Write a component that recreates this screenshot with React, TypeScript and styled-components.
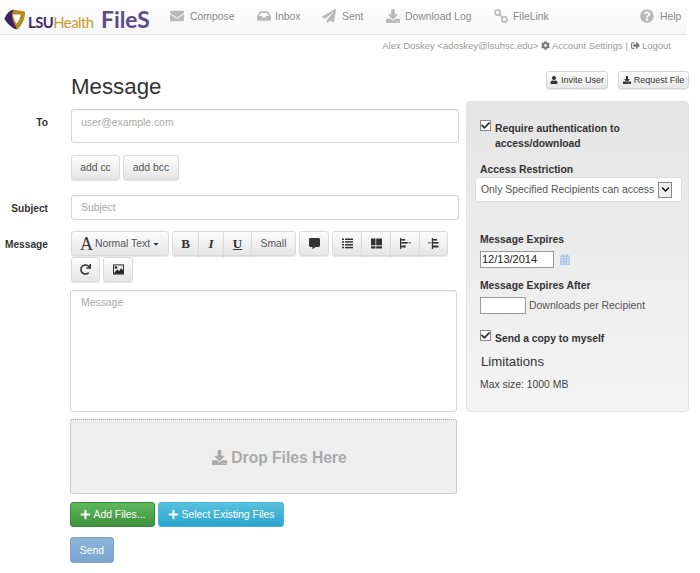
import React from "react";
import styled, { createGlobalStyle } from "styled-components";
import {
  FaEnvelope, FaInbox, FaPaperPlane, FaDownload, FaQuestionCircle, FaCog, FaSignOutAlt, FaUser,
  FaPlus, FaCommentAlt, FaRedo, FaCalendarAlt, FaCaretDown, FaCheck, FaChevronDown,
} from "react-icons/fa";

const Global = createGlobalStyle`
  html, body { margin: 0; padding: 0; background: #fff; overflow: hidden; }
  body { font-family: "Liberation Sans", Arial, sans-serif; font-size: 10.4px; color: #333; }
  * { box-sizing: border-box; }
`;

const Page = styled.div`width: 700px; height: 573px;`;

const Header = styled.header`
  width: 687px; height: 35px; display: flex; align-items: center; padding: 0 8px 0 4px;
  background: linear-gradient(#ffffff, #f6f6f6); border-bottom: 1px solid #e4e4e4;
`;
const Logo = styled.div`display: flex; align-items: center; width: 166px; flex: none;`;
const ShieldWrap = styled.span`display: flex; margin-top: 5px;`;
const LogoText = styled.span`
  font-family: Lato, sans-serif; font-size: 14.8px; letter-spacing: -0.5px; margin: 9px 0 0 2px; color: #c49a2c; width: 68px;
  b { color: #3f2a6b; font-weight: 700; }
`;
const Brand = styled.span`
  font-family: Lato, sans-serif; font-weight: 700; font-size: 22.8px; color: #5b4b8a; margin: 3px 0 0 5px;
`;
const Nav = styled.nav`display: flex; align-items: center; flex: 1; padding-bottom: 2px;`;
const NavItem = styled.a<{ $w: number; $gap: number }>`
  display: flex; align-items: center; gap: ${(p) => p.$gap}px; width: ${(p) => p.$w}px; color: #8a8a8a; font-size: 10.4px; flex: none;
  svg { color: #b9b9b9; width: 14px; height: 14px; flex: none; }
`;
const UserLine = styled.div`
  width: 671px; text-align: right; color: #999; font-size: 9.45px; height: 20px; line-height: 20px; margin-top: 1px;
  svg { width: 9px; height: 9px; color: #777; vertical-align: -1px; }
`;
const Main = styled.main`display: grid; grid-template-columns: 466px 223px; margin-top: 16px;`;
const Left = styled.div`display: flex; flex-direction: column;`;
const Right = styled.aside`display: flex; flex-direction: column;`;
const Title = styled.h1`
  font-weight: 400; font-size: 22.3px; line-height: 28px; margin: 1px 0 8px 71px; color: #333;
`;
const TopActions = styled.div`display: flex; justify-content: flex-end; gap: 10px; height: 30px; margin-top: -1px;`;
const MiniButton = styled.button<{ $w: number }>`
  height: 18px; width: ${(p) => p.$w}px; padding: 0; display: flex; align-items: center; justify-content: center; gap: 3px; font: 9px "Liberation Sans", sans-serif; color: #333;
  background: linear-gradient(#fff, #e6e6e6); border: 1px solid #d4d4d4; border-radius: 3px; box-shadow: 0 1px 1px rgba(0,0,0,.08);
  svg { width: 8px; height: 8px; }
`;
const Row = styled.div<{ $mb: number }>`display: grid; grid-template-columns: 49px 388px; column-gap: 22px; margin-bottom: ${(p) => p.$mb}px;`;
const Label = styled.label`text-align: right; font-weight: 700; font-size: 10.2px; color: #333; padding: 8px 1px 0 0;`;
const TextBox = styled.input<{ $h: number }>`
  width: 388px; height: ${(p) => p.$h}px; border: 1px solid #d4d4d4; border-radius: 3px; padding: 0 9px; font: 10.4px "Liberation Sans", sans-serif; background: #fff;
  box-shadow: inset 0 1px 1px rgba(0,0,0,.05); display: block;
  &::placeholder { color: #aaa; }
`;
const TallBox = styled.textarea`
  display: block; width: 387px; height: 122px; margin-left: 70px; border: 1px solid #d4d4d4; border-radius: 3px; padding: 6px 10px; resize: none;
  font: 10.4px "Liberation Sans", sans-serif; box-shadow: inset 0 1px 1px rgba(0,0,0,.05);
  &::placeholder { color: #aaa; }
`;
const ToInput = styled(TextBox)`padding-bottom: 8px;`;
const ToolGroupRow = styled.div`display: flex; gap: 3px;`;
const GrayButton = styled.button<{ $w?: number }>`
  height: 25px; width: ${(p) => (p.$w ? `${p.$w}px` : "auto")}; padding: 0; display: inline-flex; align-items: center; justify-content: center; gap: 2px;
  font: 10.4px "Liberation Sans", sans-serif; color: #555; background: linear-gradient(#fcfcfc, #e6e6e6);
  border: 1px solid #dadada; border-radius: 3px; box-shadow: 0 1px 1px rgba(0,0,0,.1);
  svg { width: 11px; height: 11px; color: #333; }
`;
const Toolbar = styled.div`display: flex; flex-wrap: wrap; gap: 1px 3px; width: 388px;`;
const BtnGroup = styled.div`
  display: flex;
  & > button { border-radius: 0; margin-left: -1px; }
  & > button:first-child { border-radius: 3px 0 0 3px; margin-left: 0; }
  & > button:last-child { border-radius: 0 3px 3px 0; }
`;
const BigA = styled.span`font: 400 18px "Liberation Serif", serif; line-height: 1; color: #333;`;
const SerifGlyph = styled.span<{ $italic?: boolean; $under?: boolean }>`
  font: ${(p) => (p.$italic ? "italic" : "normal")} 700 13px "Liberation Serif", serif; color: #333;
  text-decoration: ${(p) => (p.$under ? "underline" : "none")};
`;
const DropZone = styled.div`
  width: 387px; height: 75px; margin: 7px 0 8px 70px; padding: 2px 0 0 32px; display: flex; align-items: center; justify-content: center; gap: 4px;
  background: #eee; border: 1px dotted #aaa; border-radius: 3px; color: #aaa; font-weight: 700; font-size: 15.6px;
  svg { width: 15px; height: 15px; }
`;
const ActionRow = styled.div`display: flex; gap: 3px; margin-left: 70px;`;
const ColorButton = styled.button<{ $from: string; $to: string; $bd: string; $w: number }>`
  height: 25px; width: ${(p) => p.$w}px; display: flex; align-items: center; justify-content: center; gap: 3px; color: #fff; font: 10.4px "Liberation Sans", sans-serif;
  background: linear-gradient(${(p) => p.$from}, ${(p) => p.$to}); border: 1px solid ${(p) => p.$bd}; border-radius: 3px; padding: 0;
  svg { width: 11px; height: 11px; }
`;
const SendButton = styled(ColorButton)`margin: 10px 0 0 70px; height: 26px;`;
const Panel = styled.section`
  height: 311px; padding: 18px 14px 0 13px; background: linear-gradient(#e5e5e5, #f4f4f4); border: 1px solid #e2e2e2; border-radius: 4px;
  display: flex; flex-direction: column;
`;
const CheckRow = styled.div<{ $mb: number }>`display: flex; gap: 4px; font-weight: 700; font-size: 10.35px; line-height: 15px; color: #333; margin-bottom: ${(p) => p.$mb}px;`;
const CheckBox = styled.span`
  width: 11px; height: 11px; flex: none; display: flex; align-items: center; justify-content: center; background: #fff; border: 1px solid #8a8a8a;
  svg { width: 9px; height: 9px; color: #333; }
`;
const CheckText = styled.span`padding-top: 1px;`;
const FieldLabel = styled.div`font-weight: 700; font-size: 10.35px; line-height: 15px; color: #333;`;
const SelectBox = styled.div`
  width: 207px; height: 25px; margin-left: -5px; padding: 0 9px 0 5px; background: #fff; border: 1px solid #ddd; border-radius: 3px; display: flex; align-items: center; justify-content: space-between;
  font-size: 10.4px; color: #555; white-space: nowrap;
`;
const SelectArrow = styled.span`
  width: 14px; height: 16px; flex: none; border: 1px solid #888; background: #eee; display: flex; align-items: center; justify-content: center;
  svg { width: 9px; height: 9px; color: #111; }
`;
const DateRow = styled.div`display: flex; align-items: center; gap: 6px; margin: 4px 0 10px;`;
const DateInput = styled.div`width: 74px; height: 17px; border: 1px solid #999; background: #fff; font-size: 11px; line-height: 15px; padding-left: 1px; color: #222;`;
const CalIcon = styled(FaCalendarAlt)`width: 10px; height: 11px; color: #a9c6e6;`;
const DownloadRow = styled.div`display: flex; align-items: center; gap: 3px; margin: 4px 0 16px; font-size: 10.45px; color: #555;`;
const SmallInput = styled.div`width: 46px; height: 17px; border: 1px solid #999; background: #fff;`;
const PanelHeading = styled.h3`font-weight: 400; font-size: 13.2px; line-height: 18px; margin: 7px 0 7px; padding-left: 1px; color: #333;`;
const MaxSize = styled.p`margin: 0; font-size: 10.4px; line-height: 13px; color: #444;`;
const Spacer = styled.div<{ $h: number }>`height: ${(p) => p.$h}px; flex: none;`;

const Shield = () => (
  <svg width="22" height="21" viewBox="0 0 22 21">
    <path d="M0.5 10 C3 4 6 1 10 0.8 L21 2.5 C21.5 8 19 14 15 19 C13.5 20.5 11.5 20.5 10 19.5 C6 17 3 14 0.5 10 Z" fill="#b58b20" />
    <path d="M0.5 10 C3 4 6 1 10 0.8 C8 3 7.5 5 8 8 C8.8 12 10.5 16 13 20 C12 20.5 11 20.2 10 19.5 C6 17 3 14 0.5 10 Z" fill="#3a2168" />
    <path d="M9 5.5 L16.5 5.5 C16.5 8.5 15 12 12.5 14.5 C10.8 12 9.5 9 9 5.5 Z" fill="#ffffff" />
  </svg>
);
const LinkIcon = () => (
  <svg viewBox="0 0 14 14" fill="none" stroke="currentColor" strokeWidth="1.6">
    <circle cx="3.6" cy="3.6" r="2.6" />
    <circle cx="10.4" cy="10.4" r="2.6" />
    <path d="M5.5 5.5 L8.5 8.5" />
  </svg>
);
const ListIcon = () => (
  <svg viewBox="0 0 11 11" fill="currentColor">
    <rect x="0" y="0.5" width="2" height="1.5" /><rect x="3" y="0.5" width="8" height="1.5" />
    <rect x="0" y="3.2" width="2" height="1.5" /><rect x="3" y="3.2" width="8" height="1.5" />
    <rect x="0" y="6" width="2" height="1.5" /><rect x="3" y="6" width="8" height="1.5" />
    <rect x="0" y="8.8" width="2" height="1.5" /><rect x="3" y="8.8" width="8" height="1.5" />
  </svg>
);
const BlocksIcon = () => (
  <svg viewBox="0 0 11 10" fill="currentColor">
    <rect x="0" y="0" width="4.5" height="6.8" /><rect x="5.2" y="0" width="5.8" height="6.8" />
    <rect x="0" y="7.8" width="4.5" height="2.2" /><rect x="5.2" y="7.8" width="5.8" height="2.2" />
  </svg>
);
const AlignLeftIcon = () => (
  <svg viewBox="0 0 11 11" fill="currentColor">
    <rect x="0" y="0" width="1.2" height="11" /><rect x="1.2" y="1" width="4" height="1.6" />
    <rect x="1.2" y="4" width="6.5" height="1.6" /><rect x="1.2" y="7.5" width="4.5" height="2" />
    <rect x="8.5" y="4.4" width="2.5" height="0.9" />
  </svg>
);
const AlignRightIcon = () => (
  <svg viewBox="0 0 11 11" fill="currentColor">
    <rect x="3.8" y="0" width="1.2" height="11" /><rect x="5" y="1" width="4" height="1.6" />
    <rect x="5" y="4" width="5.5" height="1.6" /><rect x="5" y="7.5" width="5.5" height="2" />
    <rect x="0" y="4.4" width="3.2" height="0.9" />
  </svg>
);
const PictureIcon = () => (
  <svg viewBox="0 0 12 11">
    <rect width="12" height="11" fill="#222" />
    <rect x="1" y="1" width="10" height="9" fill="#e9e9e9" />
    <circle cx="3.2" cy="3.4" r="1.4" fill="#222" />
    <path d="M1 9.6 L4.6 5.6 L6.6 7.4 L8.8 4.2 L11 6.6 L11 10 L1 10 Z" fill="#222" />
  </svg>
);

export default function App() {
  return (
    <Page>
      <Global />
      <Header>
        <Logo>
          <ShieldWrap><Shield /></ShieldWrap>
          <LogoText><b>LSU</b>Health</LogoText>
          <Brand>FileS</Brand>
        </Logo>
        <Nav>
          <NavItem $w={87} $gap={6}><FaEnvelope />Compose</NavItem>
          <NavItem $w={65} $gap={4}><FaInbox />Inbox</NavItem>
          <NavItem $w={64} $gap={6}><FaPaperPlane />Sent</NavItem>
          <NavItem $w={108} $gap={5}><FaDownload />Download Log</NavItem>
          <NavItem $w={146} $gap={5}><LinkIcon />FileLink</NavItem>
          <NavItem $w={40} $gap={6}><FaQuestionCircle />Help</NavItem>
        </Nav>
      </Header>
      <UserLine>
        Alex Doskey &lt;adoskey@lsuhsc.edu&gt; <FaCog /> Account Settings | <FaSignOutAlt /> Logout
      </UserLine>
      <Main>
        <Left>
          <Title>Message</Title>
          <Row $mb={12}>
            <Label>To</Label>
            <ToInput $h={34} placeholder="user@example.com" />
          </Row>
          <Row $mb={15}>
            <span />
            <ToolGroupRow>
              <GrayButton $w={49}>add cc</GrayButton>
              <GrayButton $w={56}>add bcc</GrayButton>
            </ToolGroupRow>
          </Row>
          <Row $mb={11}>
            <Label>Subject</Label>
            <TextBox $h={25} placeholder="Subject" />
          </Row>
          <Row $mb={8}>
            <Label>Message</Label>
            <Toolbar>
              <GrayButton $w={98}><BigA>A</BigA>Normal Text<FaCaretDown style={{ width: 8, height: 8 }} /></GrayButton>
              <BtnGroup>
                <GrayButton $w={27}><SerifGlyph>B</SerifGlyph></GrayButton>
                <GrayButton $w={26}><SerifGlyph $italic>I</SerifGlyph></GrayButton>
                <GrayButton $w={29}><SerifGlyph $under>U</SerifGlyph></GrayButton>
                <GrayButton $w={45}>Small</GrayButton>
              </BtnGroup>
              <GrayButton $w={30}><FaCommentAlt /></GrayButton>
              <BtnGroup>
                <GrayButton $w={30}><ListIcon /></GrayButton>
                <GrayButton $w={30}><BlocksIcon /></GrayButton>
                <GrayButton $w={30}><AlignLeftIcon /></GrayButton>
                <GrayButton $w={29}><AlignRightIcon /></GrayButton>
              </BtnGroup>
              <GrayButton $w={29}><FaRedo /></GrayButton>
              <GrayButton $w={30}><PictureIcon /></GrayButton>
            </Toolbar>
          </Row>
          <TallBox placeholder="Message" />
          <DropZone><FaDownload />Drop Files Here</DropZone>
          <ActionRow>
            <ColorButton $w={85} $from="#5eb95e" $to="#3f913f" $bd="#3a8a3a"><FaPlus />Add Files...</ColorButton>
            <ColorButton $w={126} $from="#5bc0de" $to="#2aa5cf" $bd="#46b8da"><FaPlus />Select Existing Files</ColorButton>
          </ActionRow>
          <SendButton $w={44} $from="#8db4d9" $to="#7aa5cf" $bd="#7aa5cf">Send</SendButton>
        </Left>
        <Right>
          <TopActions>
            <MiniButton $w={62}><FaUser />Invite User</MiniButton>
            <MiniButton $w={71}><FaDownload />Request File</MiniButton>
          </TopActions>
          <Panel>
            <CheckRow $mb={11}>
              <CheckBox><FaCheck /></CheckBox>
              <CheckText>Require authentication to<br />access/download</CheckText>
            </CheckRow>
            <FieldLabel>Access Restriction</FieldLabel>
            <SelectBox>Only Specified Recipients can access<SelectArrow><FaChevronDown /></SelectArrow></SelectBox>
            <Spacer $h={30} />
            <FieldLabel>Message Expires</FieldLabel>
            <DateRow><DateInput>12/13/2014</DateInput><CalIcon /></DateRow>
            <FieldLabel>Message Expires After</FieldLabel>
            <DownloadRow><SmallInput />Downloads per Recipient</DownloadRow>
            <CheckRow $mb={0}>
              <CheckBox><FaCheck /></CheckBox>
              <CheckText>Send a copy to myself</CheckText>
            </CheckRow>
            <PanelHeading>Limitations</PanelHeading>
            <MaxSize>Max size: 1000 MB</MaxSize>
          </Panel>
        </Right>
      </Main>
    </Page>
  );
}
